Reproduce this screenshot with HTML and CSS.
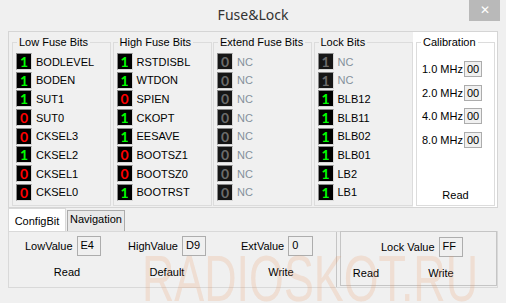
FILE: index.html
```html
<!DOCTYPE html>
<html lang="en">
  <head>
    <meta charset="UTF-8" />
    <title>Fuse&amp;Lock</title>
    <link rel="stylesheet" href="styles.css">
  </head>
  <body>
    <div class="titlebar">
      <span class="title">Fuse&amp;Lock</span>
      <span class="close">&#x2715;</span>
    </div>

    <div class="fuse-panel">
      <div class="groups">
        <fieldset class="group">
          <legend>Low Fuse Bits</legend>
          <div class="bits">
            <div class="row"><span class="bit on">1</span><span class="name">BODLEVEL</span></div>
            <div class="row"><span class="bit on">1</span><span class="name">BODEN</span></div>
            <div class="row"><span class="bit on">1</span><span class="name">SUT1</span></div>
            <div class="row"><span class="bit off">0</span><span class="name">SUT0</span></div>
            <div class="row"><span class="bit off">0</span><span class="name">CKSEL3</span></div>
            <div class="row"><span class="bit on">1</span><span class="name">CKSEL2</span></div>
            <div class="row"><span class="bit off">0</span><span class="name">CKSEL1</span></div>
            <div class="row"><span class="bit off">0</span><span class="name">CKSEL0</span></div>
          </div>
        </fieldset>
        <fieldset class="group">
          <legend>High Fuse Bits</legend>
          <div class="bits">
            <div class="row"><span class="bit on">1</span><span class="name">RSTDISBL</span></div>
            <div class="row"><span class="bit on">1</span><span class="name">WTDON</span></div>
            <div class="row"><span class="bit off">0</span><span class="name">SPIEN</span></div>
            <div class="row"><span class="bit on">1</span><span class="name">CKOPT</span></div>
            <div class="row"><span class="bit on">1</span><span class="name">EESAVE</span></div>
            <div class="row"><span class="bit off">0</span><span class="name">BOOTSZ1</span></div>
            <div class="row"><span class="bit off">0</span><span class="name">BOOTSZ0</span></div>
            <div class="row"><span class="bit on">1</span><span class="name">BOOTRST</span></div>
          </div>
        </fieldset>
        <fieldset class="group">
          <legend>Extend Fuse Bits</legend>
          <div class="bits">
            <div class="row"><span class="bit dis">0</span><span class="name nc">NC</span></div>
            <div class="row"><span class="bit dis">0</span><span class="name nc">NC</span></div>
            <div class="row"><span class="bit dis">0</span><span class="name nc">NC</span></div>
            <div class="row"><span class="bit dis">0</span><span class="name nc">NC</span></div>
            <div class="row"><span class="bit dis">0</span><span class="name nc">NC</span></div>
            <div class="row"><span class="bit dis">0</span><span class="name nc">NC</span></div>
            <div class="row"><span class="bit dis">0</span><span class="name nc">NC</span></div>
            <div class="row"><span class="bit dis">0</span><span class="name nc">NC</span></div>
          </div>
        </fieldset>
        <fieldset class="group">
          <legend>Lock Bits</legend>
          <div class="bits">
            <div class="row"><span class="bit dis">1</span><span class="name nc">NC</span></div>
            <div class="row"><span class="bit dis">1</span><span class="name nc">NC</span></div>
            <div class="row"><span class="bit on">1</span><span class="name">BLB12</span></div>
            <div class="row"><span class="bit on">1</span><span class="name">BLB11</span></div>
            <div class="row"><span class="bit on">1</span><span class="name">BLB02</span></div>
            <div class="row"><span class="bit on">1</span><span class="name">BLB01</span></div>
            <div class="row"><span class="bit on">1</span><span class="name">LB2</span></div>
            <div class="row"><span class="bit on">1</span><span class="name">LB1</span></div>
          </div>
        </fieldset>
      </div>

      <div class="calib-panel">
        <fieldset class="calib">
          <legend>Calibration</legend>
          <div class="cal-rows">
            <div class="cal-row"><span class="lbl">1.0 MHz</span><span class="box">00</span></div>
            <div class="cal-row"><span class="lbl">2.0 MHz</span><span class="box">00</span></div>
            <div class="cal-row"><span class="lbl">4.0 MHz</span><span class="box">00</span></div>
            <div class="cal-row"><span class="lbl">8.0 MHz</span><span class="box">00</span></div>
          </div>
          <div class="cal-read">Read</div>
        </fieldset>
      </div>
    </div>

    <div class="tabs">
      <div class="tab active">ConfigBit</div>
      <div class="tab">Navigation</div>
    </div>

    <div class="tab-page">
      <div class="config">
        <div class="field-row">
          <div class="field f-low"><span>LowValue</span><span class="value">E4</span></div>
          <div class="field f-high"><span>HighValue</span><span class="value">D9</span></div>
          <div class="field"><span>ExtValue</span><span class="value wide">0</span></div>
        </div>
        <div class="btn-row">
          <span>Read</span>
          <span>Default</span>
          <span>Write</span>
        </div>
      </div>
      <div class="lock">
        <div class="field-row">
          <div class="field"><span>Lock Value</span><span class="value">FF</span></div>
        </div>
        <div class="btn-row">
          <span>Read</span>
          <span>Write</span>
        </div>
      </div>
    </div>

    <div class="watermark">RADIOSKOT.RU</div>
  </body>
</html>
```

FILE: styles.css
```css
* {
  box-sizing: border-box;
}

body {
  margin: 0;
  width: 506px;
  height: 303px;
  overflow: hidden;
  position: relative;
  background-color: #f0f0f0;
  font-family: "Liberation Sans", Arial, sans-serif;
  font-size: 11px;
  color: black;
}

.titlebar {
  height: 31px;
  display: grid;
  grid-template-columns: 1fr auto 1fr;
  align-items: start;
}

.title {
  grid-column: 2;
  font-family: "Noto Sans", sans-serif;
  font-size: 14px;
  line-height: 30px;
  color: #333;
}

.close {
  grid-column: 3;
  justify-self: end;
  margin-right: 6px;
  width: 31px;
  height: 21px;
  background-color: #b9b9b9;
  color: white;
  text-align: center;
  font-size: 12px;
  line-height: 21px;
}

/* top panel with the fuse groups */
.fuse-panel {
  display: flex;
  margin-left: 8px;
  width: 490px;
  height: 177px;
  border: 1px solid #d5d5d5;
}

.groups {
  display: flex;
  gap: 1.5px;
  padding-left: 3px;
}

.group,
.calib {
  margin: 4px 0 1px;
  padding: 0 3px;
  border: 1px solid #dcdcdc;
  min-width: 0;
}

.group {
  width: 99px;
}

legend {
  margin-left: 1px;
  padding: 0 2px;
  font-size: 11px;
  line-height: 12px;
}

.bits {
  display: flex;
  flex-direction: column;
  gap: 1.7px;
  padding-top: 5px;
}

.row {
  display: flex;
  align-items: center;
  height: 17px;
}

.name {
  margin-left: 4px;
}

.nc {
  color: #84909c;
}

.bit {
  width: 16px;
  height: 17px;
  border: 1px solid;
  border-color: #8a8a8a #d8d8d8 #d8d8d8 #8a8a8a;
  background-color: black;
  font-family: Lato, sans-serif;
  font-weight: bold;
  font-size: 14px;
  line-height: 15px;
  text-align: center;
}

.on {
  color: #00ff00;
}

.off {
  color: #ff0000;
}

.dis {
  background-color: #161616;
  color: #6c6c6c;
}

/* calibration */
.calib-panel {
  flex: 1;
  display: flex;
  padding: 0 2px 0 3.5px;
  background-color: white;
}

.calib {
  flex: 1;
  display: flex;
  flex-direction: column;
}

.cal-rows {
  display: flex;
  flex-direction: column;
  gap: 3.6px;
  padding: 11px 0 0 2px;
}

.cal-row {
  display: flex;
  align-items: center;
  height: 20px;
}

.lbl {
  width: 42px;
}

.box {
  width: 18px;
  height: 16px;
  padding: 1px 0 0 2px;
  border: 1px solid #acacac;
  background-color: #f0f0f0;
  line-height: 13px;
}

.cal-read {
  margin-top: auto;
  height: 20px;
  line-height: 20px;
  text-align: center;
}

/* tabs */
.tabs {
  display: flex;
  align-items: flex-end;
  height: 23px;
  margin-left: 8px;
}

.tab {
  width: 58px;
  height: 21px;
  margin-left: 1px;
  padding-top: 2px;
  border: 1px solid #acacac;
  border-bottom: none;
  background-color: #e9e9e9;
  text-align: center;
  line-height: 13px;
}

.tab.active {
  height: 23px;
  margin-left: 0;
  padding-top: 6px;
  border-color: #d9d9d9;
  background-color: white;
}

.tab-page {
  display: flex;
  margin-left: 8px;
  width: 490px;
  height: 57px;
  border: 1px solid #d9d9d9;
}

.config {
  width: 328px;
  padding-top: 4px;
  border-right: 1px solid #c5c5c5;
}

.field-row {
  display: flex;
  align-items: center;
  height: 20px;
  padding-left: 16px;
}

.field {
  display: flex;
  align-items: center;
  gap: 4px;
}

.f-low {
  width: 103px;
}

.f-high {
  width: 113px;
}

.value {
  width: 24px;
  height: 20px;
  padding: 2px 0 0 3px;
  border: 1px solid #adadad;
  line-height: 13px;
}

.value.wide {
  width: 25px;
}

.btn-row {
  display: grid;
  grid-template-columns: 80px 120px 108px;
  margin-top: 6px;
  padding-left: 18px;
  height: 20px;
  line-height: 20px;
  text-align: center;
}

.lock {
  flex: 1;
  margin: -1px 0 1px 3px;
  padding-top: 5px;
  border: 1px solid #c5c5c5;
}

.lock .field-row {
  padding-left: 40px;
}

.lock .btn-row {
  grid-template-columns: 50px 100px;
  padding-left: 0;
}

.watermark {
  position: absolute;
  left: 142px;
  top: 247px;
  font-family: "Liberation Sans", Arial, sans-serif;
  font-size: 64px;
  line-height: 64px;
  white-space: nowrap;
  color: rgba(235, 150, 95, 0.2);
  transform: scaleX(0.7);
  transform-origin: left top;
  pointer-events: none;
}
```
